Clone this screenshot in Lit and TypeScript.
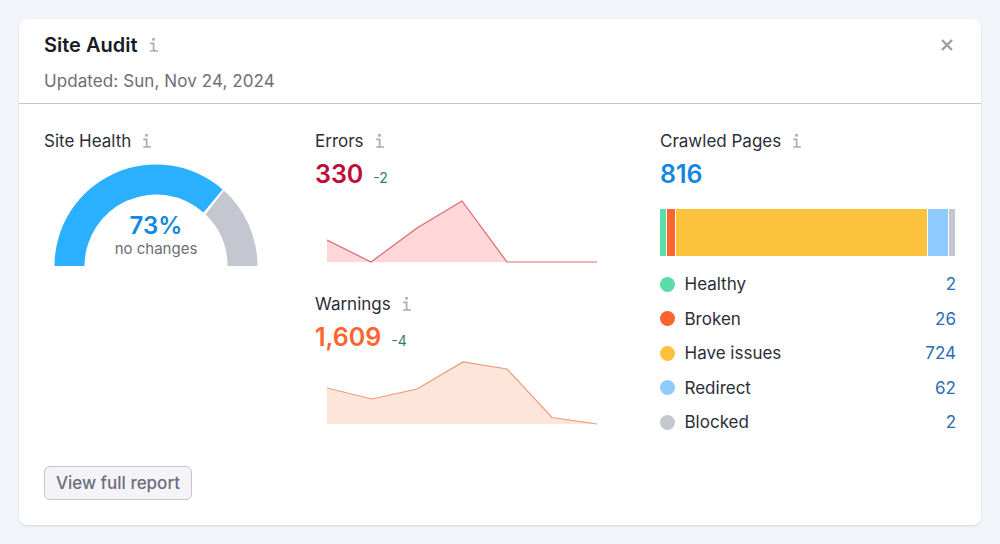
import { LitElement, html, css, svg } from "lit";
import { customElement } from "lit/decorators.js";

const infoIcon = html`<svg class="info" width="10" height="16" viewBox="0 0 10 16">
  <rect x="3.2" y="1" width="2.6" height="2.6" fill="#a9abb6"></rect>
  <path d="M1.2 6.4H4.6V12.3Q4.6 14 6.3 14H9M1.2 14H4.6" fill="none" stroke="#a9abb6" stroke-width="1.7"></path>
</svg>`;

const legend = [
  { name: "Healthy", value: 2, color: "#59ddaa", bar: 6 },
  { name: "Broken", value: 26, color: "#ff642d", bar: 8 },
  { name: "Have issues", value: 724, color: "#fdc23c", bar: 251 },
  { name: "Redirect", value: 62, color: "#8fcbff", bar: 20 },
  { name: "Blocked", value: 2, color: "#c4c7cf", bar: 6 },
];

function spark(points: number[][], base: number, fill: string, line: string) {
  const pts = points.map((p) => p.join(",")).join(" ");
  const first = points[0][0];
  const last = points[points.length - 1][0];
  return html`<svg class="spark" width="284" height="72" viewBox="0 0 284 72">
    ${svg`<polygon points="${first},${base} ${pts} ${last},${base}" fill="${fill}"></polygon>
    <polyline points="${pts}" fill="none" stroke="${line}" stroke-width="1.2"></polyline>`}
  </svg>`;
}

@customElement("app-root")
export class AppRoot extends LitElement {
  static styles = css`
    :host {
      display: block;
      height: 544px;
      box-sizing: border-box;
      padding: 19px;
      background: #f2f5f9;
      font-family: Inter, "Liberation Sans", sans-serif;
      color: #2b2e38;
    }
    .card {
      height: 506px;
      box-sizing: border-box;
      display: flex;
      flex-direction: column;
      background: #fff;
      border-radius: 8px;
      box-shadow: 0 1px 2px rgba(120, 125, 140, 0.25);
    }
    .head {
      position: relative;
      height: 85px;
      box-sizing: border-box;
      padding: 14px 25px 0;
      border-bottom: 1px solid #c4c7cf;
      flex: none;
    }
    .title {
      display: flex;
      align-items: center;
      gap: 11px;
      height: 24px;
      font-size: 20px;
      font-weight: 600;
      color: #191b23;
    }
    .updated {
      margin-top: 13px;
      font-size: 17px;
      letter-spacing: 0.09px;
      line-height: 22px;
      color: #6c6e79;
    }
    .close {
      position: absolute;
      top: 19px;
      right: 27px;
    }
    .body {
      flex: 1;
      display: grid;
      grid-template-columns: 271px 345px 296px;
      padding: 25px 25px 0;
    }
    .label {
      display: flex;
      align-items: center;
      gap: 11px;
      height: 24px;
      font-size: 17px;
      color: #2b2e38;
    }
    .num {
      display: flex;
      align-items: baseline;
      gap: 10px;
      height: 32px;
      margin-top: 5px;
      font-size: 25px;
      font-weight: 600;
      line-height: 32px;
    }
    .delta {
      font-size: 14px;
      font-weight: 400;
      color: #2f7f6f;
    }
    .gauge {
      position: relative;
      width: 204px;
      margin: 11px 0 0 10px;
    }
    .gauge svg {
      display: block;
    }
    .center {
      position: absolute;
      left: 0;
      right: 0;
      top: 47px;
      text-align: center;
    }
    .pct {
      font-size: 24px;
      font-weight: 600;
      line-height: 29px;
      color: #1487e0;
    }
    .sub {
      font-size: 15px;
      line-height: 18px;
      color: #6c6e79;
    }
    .spark {
      display: block;
      margin: 2px 0 0 12px;
    }
    .warnings {
      margin-top: 28px;
    }
    .warnings .spark {
      margin-top: 4px;
    }
    .bar {
      display: flex;
      gap: 1px;
      height: 47px;
      margin-top: 19px;
    }
    .legend {
      margin-top: 11px;
    }
    .row {
      display: flex;
      align-items: center;
      height: 34.5px;
      font-size: 17px;
      color: #2b2e38;
    }
    .dot {
      width: 15px;
      height: 15px;
      border-radius: 50%;
      margin-right: 9.5px;
    }
    .value {
      margin-left: auto;
      color: #2a6db5;
    }
    .foot {
      padding: 0 25px 25px;
      flex: none;
    }
    button {
      display: block;
      height: 34px;
      width: 148px;
      padding: 0;
      box-sizing: border-box;
      border: 1px solid #c4c7cf;
      border-radius: 6px;
      background: #f4f4f8;
      font: 500 17px Inter, "Liberation Sans", sans-serif;
      color: #6c6e79;
    }
  `;

  render() {
    return html`<div class="card">
      <div class="head">
        <div class="title">Site Audit ${infoIcon}</div>
        <div class="updated">Updated: Sun, Nov 24, 2024</div>
        <svg class="close" width="14" height="14" viewBox="0 0 14 14">
          <path d="M2 2L12 12M12 2L2 12" stroke="#9a9ca6" stroke-width="2.4" fill="none"></path>
        </svg>
      </div>
      <div class="body">
        <div>
          <div class="label">Site Health ${infoIcon}</div>
          <div class="gauge">
            <svg width="204" height="102" viewBox="0 0 204 102">
              <path d="M0.5 102A101.5 101.5 0 0 1 168.6 25.4L149.5 48.6A71.5 71.5 0 0 0 30.5 102Z" fill="#2bafff"></path>
              <path d="M170 26.6A101.5 101.5 0 0 1 203.5 102H173.5A71.5 71.5 0 0 0 151.5 50.4Z" fill="#c4c7cf"></path>
            </svg>
            <div class="center">
              <div class="pct">73%</div>
              <div class="sub">no changes</div>
            </div>
          </div>
        </div>
        <div>
          <div class="label">Errors ${infoIcon}</div>
          <div class="num" style="color:#c00b36">330 <span class="delta">-2</span></div>
          ${spark([[0, 48], [44, 70], [90, 36], [135, 9], [180, 70], [270, 70]], 70, "#ffd7d9", "#d96a70")}
          <div class="warnings">
            <div class="label">Warnings ${infoIcon}</div>
            <div class="num" style="color:#ff642d">1,609 <span class="delta">-4</span></div>
            ${spark([[0, 31], [45, 42], [90, 32], [136, 5], [180, 12], [225, 60.5], [270, 67]], 67, "#fee5da", "#ee9a78")}
          </div>
        </div>
        <div>
          <div class="label">Crawled Pages ${infoIcon}</div>
          <div class="num" style="color:#1487e0">816</div>
          <div class="bar">
            ${legend.map((l) => html`<div style="width:${l.bar}px;background:${l.color}"></div>`)}
          </div>
          <div class="legend">
            ${legend.map(
              (l) => html`<div class="row">
                <span class="dot" style="background:${l.color}"></span>
                ${l.name}
                <span class="value">${l.value}</span>
              </div>`
            )}
          </div>
        </div>
      </div>
      <div class="foot"><button>View full report</button></div>
    </div>`;
  }
}
